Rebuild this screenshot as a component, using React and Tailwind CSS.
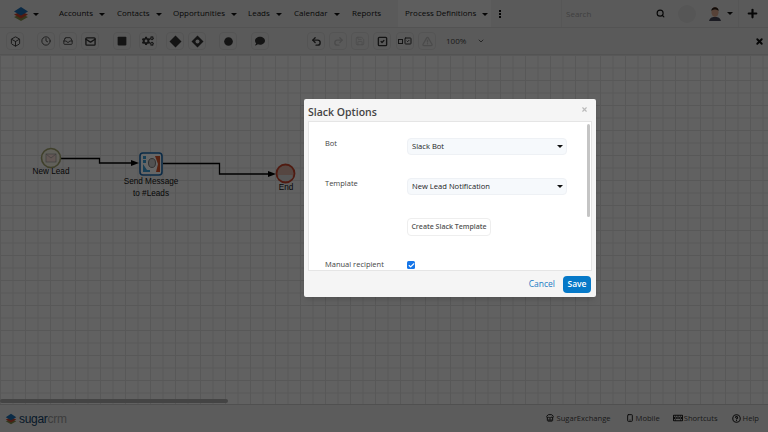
import React from "react";
import {
  Box,
  Clock,
  Inbox,
  Mail,
  Undo2,
  Redo2,
  Save,
  SquareCheck,
  TriangleAlert,
  ChevronDown,
  Search,
  X,
  Plus,
  Smartphone,
  CircleHelp,
  Store,
  Check,
} from "lucide-react";
import { FaCogs, FaSquare, FaCircle, FaComment, FaKeyboard } from "react-icons/fa";

const navItems = [
  { label: "Accounts", w: "w-[58px]" },
  { label: "Contacts", w: "w-[56px]" },
  { label: "Opportunities", w: "w-[75px]" },
  { label: "Leads", w: "w-[46px]" },
  { label: "Calendar", w: "w-[58px]" },
  { label: "Reports", w: "w-[46px]" },
];

const Caret = ({ className = "" }) => (
  <span
    className={`inline-block w-0 h-0 border-x-[3px] border-x-transparent border-t-[3px] border-t-[#111] ${className}`}
  ></span>
);

const Logo = ({ size = 16 }) => (
  <svg width={size} height={size} viewBox="0 0 16 16">
    <path d="M1 11 L8 8 L15 11 L8 15 Z" fill="#7d8a4a" />
    <path d="M1 8.5 L8 5.5 L15 8.5 L8 12.5 Z" fill="#c8452c" />
    <path d="M1 5.5 L8 1 L15 5.5 L8 9.5 Z" fill="#1c6bb0" />
  </svg>
);

const ToolButton = ({ children, disabled, ml = "" }) => (
  <div
    className={`w-[18px] h-[18px] flex items-center justify-center rounded-sm border border-[#d2d2d2] ${ml} ${
      disabled ? "text-[#bcbcbc]" : "text-[#333]"
    }`}
  >
    {children}
  </div>
);

const Diamond = ({ hollow }) => (
  <svg width="13" height="13" viewBox="0 0 13 13">
    <path d="M6.5 0.5 L12.5 6.5 L6.5 12.5 L0.5 6.5 Z" fill="#333" />
    {hollow && <circle cx="6.5" cy="6.5" r="2" fill="#e2e2e2" />}
  </svg>
);

const SelectBox = ({ value }) => (
  <div className="w-[160px] h-[17px] flex items-center justify-between pl-[4px] pr-[3px] bg-[#f6f9fc] border border-[#eef1f5] rounded-sm text-[7.6px] text-[#222]">
    <span>{value}</span>
    <Caret className="border-x-[2.5px] border-t-[3px]" />
  </div>
);

const Field = ({ label, children, className = "" }) => (
  <div className={`flex items-start ${className}`}>
    <div className="w-[82px] -mt-[1px] text-[7.5px] leading-[12px] text-[#444]">{label}</div>
    {children}
  </div>
);

const FooterLink = ({ icon, label, className = "" }) => (
  <div className={`flex items-center text-[#222] ${className}`}>
    {icon}
    <span className="text-[7.6px] text-[#444]">{label}</span>
  </div>
);

const Diagram = () => (
  <div className="absolute left-0 top-0 w-full h-full font-['Liberation_Sans',sans-serif] text-[8.2px] text-[#111]">
    <svg className="absolute left-0 top-0" width="768" height="350" viewBox="0 55 768 350">
      <path d="M61 158.5 H99.5 V163 H131" fill="none" stroke="#000" strokeWidth="1.3" />
      <path d="M131 160 L139 163 L131 166 Z" fill="#000" />
      <path d="M163 163.5 H219.5 V174 H268" fill="none" stroke="#000" strokeWidth="1.3" />
      <path d="M268 171 L276 174 L268 177 Z" fill="#000" />
      {/* start event */}
      <circle cx="51" cy="158" r="9.5" fill="#f2f0e0" stroke="#9fa06c" strokeWidth="1.6" />
      <rect x="46" y="154" width="10" height="8" fill="#f4d9d2" stroke="#999" strokeWidth="0.7" />
      <path d="M46 154 L51 158 L56 154" fill="none" stroke="#999" strokeWidth="0.7" />
      {/* slack task */}
      <rect x="140" y="153" width="22" height="22" rx="3" fill="#fff" stroke="#1c6bb0" strokeWidth="1.6" />
      <rect x="143" y="156" width="3" height="3" fill="#3b9ed8" />
      <rect x="143" y="160" width="3" height="3" fill="#3b9ed8" />
      <path d="M143 164 L147 170 H150 V172 H143 Z" fill="#3b9ed8" />
      <path d="M155 156 H160 V172 H156 L158 164 Z" fill="#d9562b" />
      <ellipse cx="152" cy="163" rx="3.5" ry="4.5" fill="#ccc" stroke="#666" strokeWidth="0.8" />
      {/* end event */}
      <circle cx="285.5" cy="173.5" r="9" fill="#d8aea2" stroke="#c8452c" strokeWidth="1.8" />
      <path d="M278.5 175 H292.5 V178 L288 181 H283 L278.5 178 Z" fill="#d8d8d8" />
    </svg>
    <div className="absolute left-[31px] top-[111px] w-[40px] text-center">New Lead</div>
    <div className="absolute left-[121px] top-[121px] w-[60px] text-center leading-[12px]">
      Send Message
      <br />
      to #Leads
    </div>
    <div className="absolute left-[270px] top-[127px] w-[32px] text-center">End</div>
  </div>
);

export default function App() {
  return (
    <div className="relative w-[768px] h-[432px] overflow-hidden flex flex-col bg-white font-['Open_Sans',sans-serif]">
      {/* top nav */}
      <div className="h-[28px] shrink-0 flex items-center border-b border-[#d0d0d0] bg-[#e2e2e2] text-[8px] text-[#111] whitespace-nowrap">
        <div className="w-[59px] pl-[13px] flex items-center gap-[4px]">
          <Logo />
          <Caret className="mt-[1px]" />
        </div>
        {navItems.map((item) => (
          <div key={item.label} className={`${item.w} flex items-center gap-[6px]`}>
            <span className="-mt-[1px]">{item.label}</span>
            {item.label !== "Reports" && <Caret className="mt-[1px]" />}
          </div>
        ))}
        <div className="w-[93px] h-full pl-[7px] flex items-center gap-[6px] bg-[#ececec]">
          <span className="-mt-[1px]">Process Definitions</span>
          <Caret className="mt-[1px]" />
        </div>
        <div className="ml-[8px] w-[3px] flex flex-col gap-[1px]">
          <span className="w-[2px] h-[2px] bg-[#111]"></span>
          <span className="w-[2px] h-[2px] bg-[#111]"></span>
          <span className="w-[2px] h-[2px] bg-[#111]"></span>
        </div>
        <div className="ml-[59px] h-full w-[177px] pl-[4px] flex items-center border-l border-[#d8d8d8] text-[8px] text-[#a0a0a0]">
          <span className="w-[90px]">Search</span>
          <Search size={9} strokeWidth={3} className="text-[#111]" />
          <span className="ml-[13px] w-[18px] h-[18px] rounded-full bg-[#d6d6d6]"></span>
          <svg className="ml-[13px]" width="12" height="15" viewBox="0 0 12 15">
            <path d="M0 15 C1 11 4 11 6 11 C8 11 11 11 12 15 Z" fill="#445" />
            <ellipse cx="6" cy="6" rx="3.6" ry="5" fill="#d9a68c" />
            <path d="M2.4 5 C2 0 10 0 9.6 5 C8 3 4 3 2.4 5 Z" fill="#2a1c14" />
          </svg>
          <Caret className="ml-[6px]" />
        </div>
        <div className="h-full pl-[7px] flex items-center border-l border-[#d8d8d8]">
          <Plus size={13} strokeWidth={4} className="text-[#111]" />
        </div>
      </div>

      {/* toolbar */}
      <div className="h-[27px] shrink-0 flex items-center pl-[6px] border-b border-[#d0d0d0] bg-[#e2e2e2]">
        <ToolButton><Box size={11} /></ToolButton>
        <ToolButton ml="ml-[13px]"><Clock size={10} /></ToolButton>
        <ToolButton ml="ml-[4px]"><Inbox size={10} /></ToolButton>
        <ToolButton ml="ml-[4px]"><Mail size={11} strokeWidth={3} /></ToolButton>
        <ToolButton ml="ml-[14px]"><FaSquare size={10} /></ToolButton>
        <ToolButton ml="ml-[8px]"><FaCogs size={12} /></ToolButton>
        <ToolButton ml="ml-[9px]"><Diamond /></ToolButton>
        <ToolButton ml="ml-[4px]"><Diamond hollow /></ToolButton>
        <ToolButton ml="ml-[13px]"><FaCircle size={9} /></ToolButton>
        <ToolButton ml="ml-[14px]"><FaComment size={10} /></ToolButton>
        <ToolButton ml="ml-[38px]"><Undo2 size={11} strokeWidth={3} /></ToolButton>
        <ToolButton ml="ml-[4px]" disabled><Redo2 size={11} strokeWidth={3} /></ToolButton>
        <ToolButton ml="ml-[4px]" disabled><Save size={10} /></ToolButton>
        <ToolButton ml="ml-[4px]"><SquareCheck size={11} strokeWidth={3} /></ToolButton>
        <ToolButton ml="ml-[5px]">
          <span className="flex items-center gap-[1px]">
            <span className="w-[5px] h-[5px] border border-[#333]"></span>
            <SquareCheck size={8} strokeWidth={3} />
          </span>
        </ToolButton>
        <ToolButton ml="ml-[4px]" disabled><TriangleAlert size={11} strokeWidth={3} /></ToolButton>
        <span className="ml-[10px] w-[31px] text-[8px] text-[#444]">100%</span>
        <ChevronDown size={8} strokeWidth={2.5} className="text-[#444]" />
        <X size={9} strokeWidth={5} className="ml-[270px] text-[#111]" />
      </div>

      {/* canvas */}
      <div className="relative flex-1 overflow-hidden bg-[#f2f2f2] bg-[linear-gradient(#dddddd_1px,transparent_1px),linear-gradient(90deg,#dddddd_1px,transparent_1px)] bg-[size:12.5px_12.5px]">
        <Diagram />
        <div className="absolute left-0 bottom-[1px] w-[228px] h-[4px] rounded-full bg-[#aaa]"></div>
      </div>

      {/* footer */}
      <div className="h-[28px] shrink-0 flex items-center pl-[5px] border-t border-[#c8c8c8] bg-[#e6e6e6]">
        <Logo size={12} />
        <span className="ml-[2px] font-['Liberation_Sans',sans-serif] text-[12px] leading-none tracking-tight text-[#123f66]">
          sugar<span className="text-[#999]">crm</span>
        </span>
        <div className="ml-auto flex items-center pr-[9px]">
          <FooterLink icon={<Store size={8} strokeWidth={3} className="mr-[3px]" />} label="SugarExchange" />
          <FooterLink className="ml-[15px]" icon={<Smartphone size={8} strokeWidth={3} className="mr-[2px]" />} label="Mobile" />
          <FooterLink className="ml-[13px]" icon={<FaKeyboard size={10} className="mr-[1px]" />} label="Shortcuts" />
          <FooterLink className="ml-[14px]" icon={<CircleHelp size={9} strokeWidth={3} className="mr-[2px]" />} label="Help" />
        </div>
      </div>

      {/* scrim */}
      <div className="absolute inset-0 bg-black/60"></div>

      {/* modal */}
      <div className="absolute left-[304px] top-[99px] w-[292px] h-[198px] flex flex-col rounded-[2px] bg-[#f5f5f5] shadow-md">
        <div className="h-[22px] shrink-0 flex items-end justify-between pl-[4px] pr-[8px]">
          <span className="text-[10.5px] leading-[18px] font-semibold text-[#444]">Slack Options</span>
          <X size={7} strokeWidth={4} className="mb-[8px] text-[#bbb]" />
        </div>
        <div className="relative h-[150px] mx-[4px] shrink-0 overflow-hidden pt-[16px] pl-[16px] bg-white border border-[#e5e5e5]">
          <Field label="Bot"><SelectBox value="Slack Bot" /></Field>
          <Field label="Template" className="mt-[23px]"><SelectBox value="New Lead Notification" /></Field>
          <Field label="" className="mt-[23px]">
            <div className="w-[84px] h-[18px] flex items-center justify-center rounded-sm border border-[#eeeeee] text-[7px] font-semibold text-[#555] whitespace-nowrap">
              Create Slack Template
            </div>
          </Field>
          <Field label="Manual recipient" className="mt-[23px]">
            <span className="w-[8px] h-[8px] mt-[2px] flex items-center justify-center rounded-[1.5px] bg-[#1676e8] text-white">
              <Check size={7} strokeWidth={4} />
            </span>
          </Field>
          <div className="absolute right-[1px] top-[2px] w-[3px] h-[93px] rounded-full bg-[#c4c4c4]"></div>
        </div>
        <div className="flex-1 flex items-center justify-end gap-[8px] pr-[5px]">
          <span className="text-[8.5px] text-[#1a7cc4]">Cancel</span>
          <div className="w-[28px] h-[17px] flex items-center justify-center rounded-sm bg-[#0679c8] text-[8.5px] font-semibold text-white">
            Save
          </div>
        </div>
      </div>
    </div>
  );
}
